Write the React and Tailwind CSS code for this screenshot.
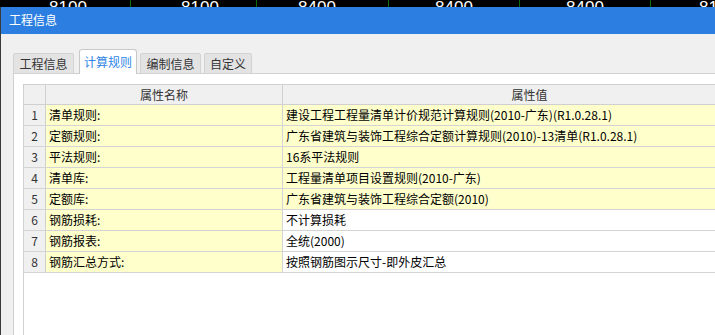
import React from "react";

const rows = [
  ["清单规则:", "建设工程工程量清单计价规范计算规则(2010-广东)(R1.0.28.1)", true],
  ["定额规则:", "广东省建筑与装饰工程综合定额计算规则(2010)-13清单(R1.0.28.1)", true],
  ["平法规则:", "16系平法规则", true],
  ["清单库:", "工程量清单项目设置规则(2010-广东)", true],
  ["定额库:", "广东省建筑与装饰工程综合定额(2010)", true],
  ["钢筋损耗:", "不计算损耗", false],
  ["钢筋报表:", "全统(2000)", false],
  ["钢筋汇总方式:", "按照钢筋图示尺寸-即外皮汇总", false],
];

function Ruler() {
  const labels = [
    { x: -6, t: "0" },
    { x: 68, t: "8100" },
    { x: 200, t: "8100" },
    { x: 317, t: "8400" },
    { x: 454, t: "8400" },
    { x: 585, t: "8400" },
    { x: 718, t: "8100" },
  ];
  const lines = [130, 256, 388, 519, 650];
  return (
    <div className="relative h-[7px] bg-black overflow-hidden shrink-0">
      {lines.map((x) => (
        <div key={x} className="absolute top-0 h-[7px] w-px bg-[#0b6b0b]" style={{ left: x }} />
      ))}
      {labels.map((l, i) => (
        <span
          key={i}
          className="absolute top-[-1px] -translate-x-1/2 text-white text-[17px] leading-none font-['Liberation_Sans',sans-serif]"
          style={{ left: l.x }}
        >
          {l.t}
        </span>
      ))}
    </div>
  );
}

function Tab({ label, active, w }) {
  if (active) {
    return (
      <div
        className={`${w} h-[25px] bg-white border border-b-0 border-[#c8c8c8] rounded-t-[3px] flex items-center justify-center text-[#2f86e6] pb-[1px]`}
      >
        {label}
      </div>
    );
  }
  return (
    <div
      className={`${w} h-[21px] bg-[#e3e3e3] border border-[#d2d2d2] rounded-t-[2px] flex items-center justify-center text-[#333]`}
    >
      {label}
    </div>
  );
}

export default function App() {
  return (
    <div className="w-[715px] h-[335px] overflow-hidden flex flex-col bg-[#f0f0f0] font-['Noto_Sans_CJK_SC',sans-serif] text-[12px] text-black">
      <Ruler />
      <div className="flex-1 flex flex-col border-l border-[#3a3a3a] min-h-0">
        <div className="h-[27px] shrink-0 bg-[#2c7fe0] text-white text-[12px] flex items-center pl-[8px] pb-[1px]">
          工程信息
        </div>
        <div className="flex-1 flex flex-col pt-[15px] min-h-0">
          <div className="flex items-end h-[25px] pl-[12px] -mb-px relative z-10 shrink-0">
            <Tab label="工程信息" w="w-[61px]" />
            <div className="w-[5px]" />
            <Tab label="计算规则" w="w-[58px]" active />
            <div className="w-[3px]" />
            <Tab label="编制信息" w="w-[61px]" />
            <div className="w-[3px]" />
            <Tab label="自定义" w="w-[48px]" />
          </div>
          <div className="flex-1 ml-[12px] w-[820px] bg-white border-l border-t border-[#d0d0d0] pt-[10px] pl-[9px] flex flex-col min-h-0">
            <div className="flex-1 border-l border-t border-[#d0d0d0] flex flex-col">
              <div className="flex h-[20px] bg-[#f0f0f0] border-b border-[#d0d0d0] text-[#333]">
                <div className="w-[22px] border-r border-[#d0d0d0]" />
                <div className="w-[237px] border-r border-[#d0d0d0] flex items-center justify-center">
                  属性名称
                </div>
                <div className="w-[494px] border-r border-[#d0d0d0] flex items-center justify-center">
                  属性值
                </div>
              </div>
              {rows.map(([name, value, yellow], i) => (
                <div key={i} className="flex h-[21px] border-b border-[#d4d4d4]">
                  <div className="w-[22px] bg-[#f0f0f0] border-r border-[#d0d0d0] flex items-center justify-center text-[#333]">
                    {i + 1}
                  </div>
                  <div className="w-[237px] bg-[#ffffcc] border-r border-[#d4d4d4] flex items-center pl-[3px] whitespace-nowrap">
                    {name}
                  </div>
                  <div
                    className={`w-[494px] ${yellow ? "bg-[#ffffcc]" : "bg-white"} border-r border-[#d4d4d4] flex items-center pl-[3px] whitespace-nowrap`}
                  >
                    {value}
                  </div>
                </div>
              ))}
            </div>
          </div>
        </div>
      </div>
    </div>
  );
}
